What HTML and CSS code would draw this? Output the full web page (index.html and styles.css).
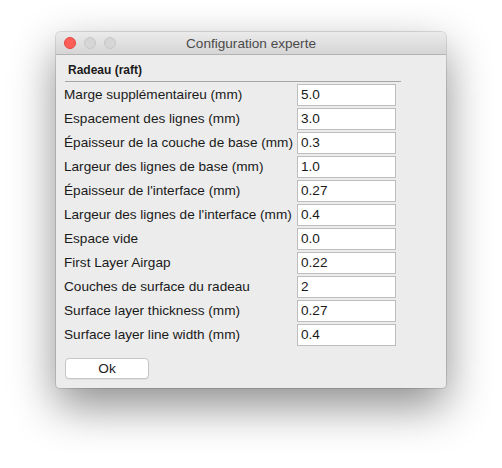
FILE: index.html
```html
<!DOCTYPE html>
<html lang="fr">
<head>
<meta charset="utf-8">
<title>Configuration experte</title>
<link rel="stylesheet" href="styles.css">
</head>
<body>
<div class="window">
  <div class="titlebar">
    <div class="lights">
      <span class="light close"></span>
      <span class="light"></span>
      <span class="light"></span>
    </div>
    <div class="title">Configuration experte</div>
  </div>
  <div class="content">
    <div class="section">Radeau (raft)</div>
    <div class="form">
      <div class="label">Marge supplémentaireu (mm)</div><div class="field">5.0</div>
      <div class="label">Espacement des lignes (mm)</div><div class="field">3.0</div>
      <div class="label">Épaisseur de la couche de base (mm)</div><div class="field">0.3</div>
      <div class="label">Largeur des lignes de base (mm)</div><div class="field">1.0</div>
      <div class="label">Épaisseur de l'interface (mm)</div><div class="field">0.27</div>
      <div class="label">Largeur des lignes de l'interface (mm)</div><div class="field">0.4</div>
      <div class="label">Espace vide</div><div class="field">0.0</div>
      <div class="label">First Layer Airgap</div><div class="field">0.22</div>
      <div class="label">Couches de surface du radeau</div><div class="field">2</div>
      <div class="label">Surface layer thickness (mm)</div><div class="field">0.27</div>
      <div class="label">Surface layer line width (mm)</div><div class="field">0.4</div>
    </div>
    <div class="actions"><button class="btn">Ok</button></div>
  </div>
</div>
</body>
</html>
```
FILE: styles.css
```css
html, body {
  margin: 0;
  padding: 0;
  background: #ffffff;
}
body {
  width: 502px;
  height: 468px;
  overflow: hidden;
  font-family: "Liberation Sans", Arial, sans-serif;
  font-size: 13.6px;
  color: #1a1a1a;
}
.window {
  margin: 32px 0 0 56px;
  width: 390px;
  height: 356px;
  background: #ececec;
  border-radius: 5px 5px 4px 4px;
  box-shadow: 0 0 0 1px rgba(0,0,0,0.12), 0 18px 45px rgba(0,0,0,0.45);
  overflow: hidden;
  display: flex;
  flex-direction: column;
}
.titlebar {
  height: 22px;
  flex: none;
  background: linear-gradient(#ebebeb, #d5d5d5);
  border-bottom: 1px solid #b3b3b3;
  display: flex;
  align-items: center;
  position: relative;
}
.lights {
  display: flex;
  gap: 8px;
  padding-left: 8px;
}
.light {
  width: 12px;
  height: 12px;
  box-sizing: border-box;
  border-radius: 50%;
  background: #d6d6d6;
  border: 1px solid #c6c6c6;
}
.light.close {
  background: #fc5f57;
  border-color: #e3463f;
}
.title {
  position: absolute;
  left: 0;
  right: 0;
  text-align: center;
  color: #4b4b4b;
  font-size: 13.6px;
  pointer-events: none;
}
.content {
  padding: 0 0 0 8px;
  display: flex;
  flex-direction: column;
}
.section {
  font-weight: bold;
  font-size: 12px;
  margin: 0 45px 0 1px;
  padding: 9px 0 5px 3px;
  border-bottom: 1px solid #a6a6a6;
  line-height: 12px;
}
.form {
  display: grid;
  grid-template-columns: 233px 99px;
  grid-auto-rows: 22px;
  row-gap: 2px;
  margin-top: 2px;
}
.label {
  line-height: 22px;
  white-space: nowrap;
}
.field {
  background: #ffffff;
  border: 1px solid #bdbdbd;
  box-sizing: border-box;
  line-height: 20px;
  padding-left: 3px;
}
.actions {
  margin-top: 12px;
  padding-left: 1px;
}
.btn {
  width: 84px;
  height: 21px;
  background: #ffffff;
  border: 1px solid #c6c6c6;
  border-radius: 4px;
  font-family: "Liberation Sans", Arial, sans-serif;
  font-size: 13.6px;
  color: #1a1a1a;
  padding: 0;
  box-shadow: 0 1px 0 rgba(0,0,0,0.05);
}
```
